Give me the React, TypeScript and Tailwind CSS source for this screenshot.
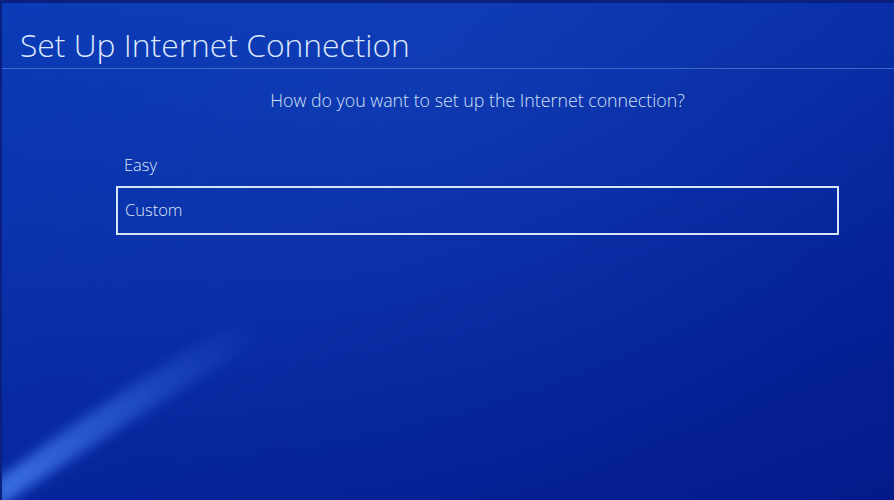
import React from "react";

export default function App() {
  return (
    <div
      className="relative w-[894px] h-[500px] overflow-hidden border-t-[3px] border-l-2 border-[#0a1f7e]"
      style={{ fontFamily: '"Open Sans", "Noto Sans", sans-serif' }}
    >
      <div className="absolute inset-0 bg-[linear-gradient(160deg,#0a3ab6_0%,#0930a8_35%,#06249b_65%,#031a8a_100%)]" />
      <svg className="absolute inset-0 pointer-events-none" width="894" height="500" viewBox="0 0 894 500">
        <defs>
          <linearGradient id="streak" x1="0" y1="490" x2="250" y2="320" gradientUnits="userSpaceOnUse">
            <stop offset="0" stopColor="#4f8dff" stopOpacity="0.7" />
            <stop offset="0.55" stopColor="#3f7cf0" stopOpacity="0.4" />
            <stop offset="1" stopColor="#3a78ea" stopOpacity="0" />
          </linearGradient>
          <filter id="blur1" x="-30%" y="-30%" width="160%" height="160%">
            <feGaussianBlur stdDeviation="6" />
          </filter>
          <radialGradient id="glow" cx="420" cy="20" r="520" gradientUnits="userSpaceOnUse">
            <stop offset="0" stopColor="#2a64d8" stopOpacity="0.18" />
            <stop offset="1" stopColor="#2a64d8" stopOpacity="0" />
          </radialGradient>
        </defs>
        <rect x="0" y="0" width="894" height="500" fill="url(#glow)" />
        <path
          d="M -6 478 C 50 435 130 380 225 325 C 245 318 262 330 250 345 C 160 395 80 450 -6 506 Z"
          fill="url(#streak)"
          filter="url(#blur1)"
        />
      </svg>

      <div className="relative flex flex-col">
        <div className="h-[66px] flex items-center pl-[18px] border-b border-[#4a78d2]/80">
          <h1 className="text-[31.8px] font-light text-[#dce8fb] leading-none mt-[18px]">
            Set Up Internet Connection
          </h1>
        </div>

        <div className="flex flex-col pl-[114px] pr-[55px]">
          <p className="mt-[20px] text-center text-[17.8px] font-light text-[#d3e1f7] leading-[22px]">
            How do you want to set up the Internet connection?
          </p>
          <div className="mt-[41px] h-[26px] flex items-center pl-[8px] text-[16.5px] font-light text-[#dbe6f8]">Easy</div>
          <div className="mt-[8px] h-[49px] flex items-center pl-[7px] border-2 border-[#d6e6f7] text-[16.5px] font-light text-[#dbe6f8]">
            Custom
          </div>
        </div>
      </div>
    </div>
  );
}
